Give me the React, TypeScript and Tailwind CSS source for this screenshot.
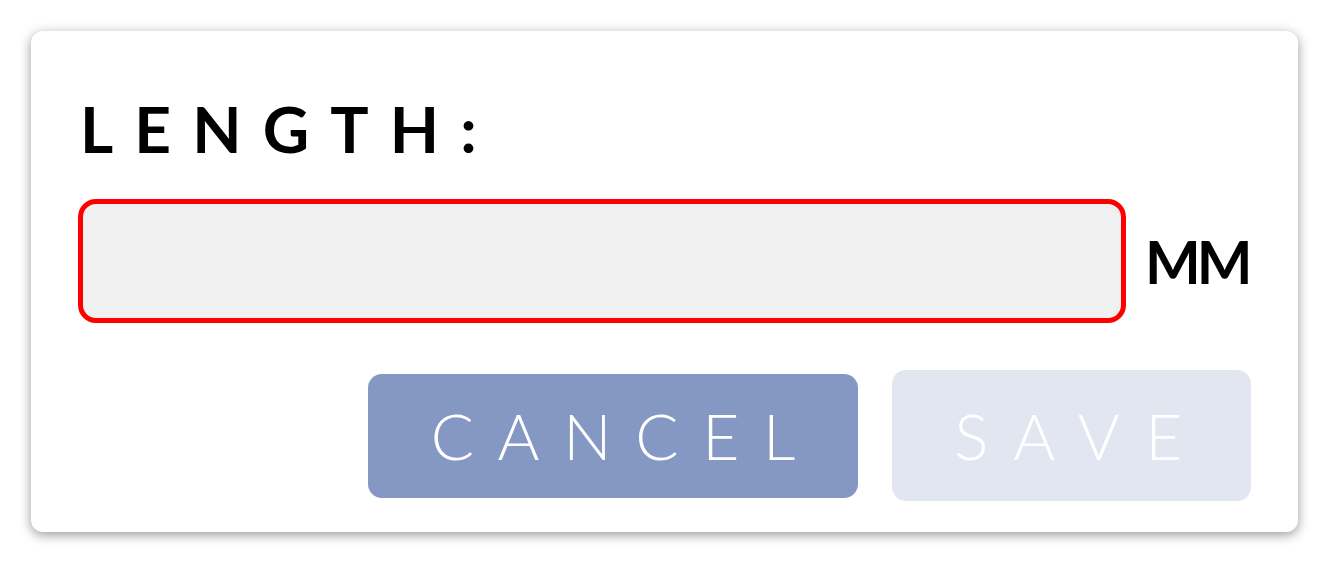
import React from "react";

export default function App() {
  return (
    <div className="w-[1331px] h-[565px] bg-white overflow-hidden pt-[31px] pl-[31px]" style={{ fontFamily: "Lato, 'Noto Sans', sans-serif" }}>
      <div className="w-[1267px] h-[501px] bg-white rounded-[12px] shadow-[0_3px_12px_rgba(0,0,0,0.4)] pt-[66px] px-[47px] pb-[31px] flex flex-col">
        <div className="h-[64px] text-[64px] leading-[64px] font-bold tracking-[0.33em] text-black pl-[2px]">LENGTH:</div>
        <div className="mt-[38px] flex items-center h-[124px]">
          <div className="w-[1048px] shrink-0 h-[124px] bg-[#f0f0f0] border-[5px] border-[#ff0000] rounded-[18px]" />
          <div className="ml-[19px] shrink-0 text-[59px] leading-[59px] font-bold tracking-[-4px] text-black whitespace-nowrap">MM</div>
        </div>
        <div className="mt-[47px] flex items-center justify-end h-[131px]">
          <div className="w-[490px] h-[124px] rounded-[14px] bg-[#8598c3] flex items-center justify-center text-white text-[64px] leading-[64px] font-light tracking-[0.37em] pl-[0.37em]">CANCEL</div>
          <div className="ml-[34px] w-[359px] h-[131px] rounded-[14px] bg-[#e1e6f0] flex items-center justify-center text-white text-[64px] leading-[64px] font-light tracking-[0.4em] pl-[0.3em]">SAVE</div>
        </div>
      </div>
    </div>
  );
}
